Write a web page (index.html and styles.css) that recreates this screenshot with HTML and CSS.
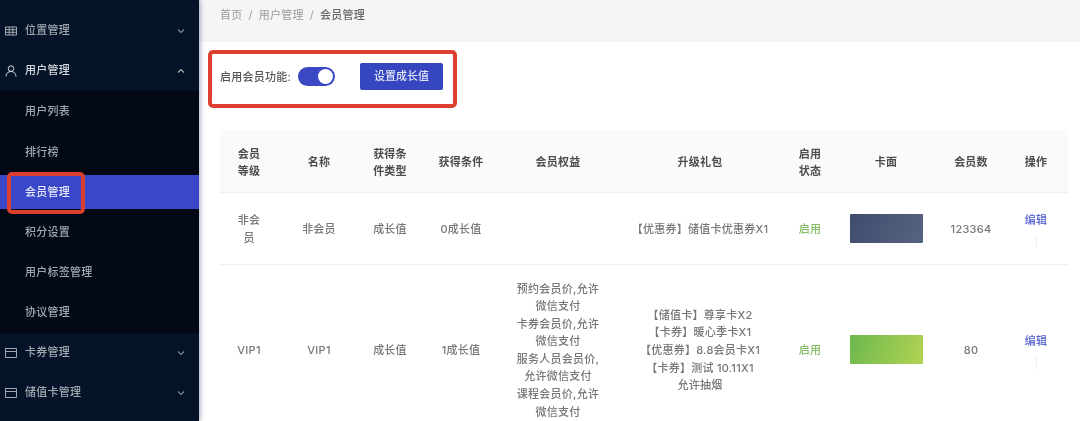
FILE: index.html
```html
<!DOCTYPE html>
<html lang="zh">
<head>
<meta charset="utf-8">
<title>会员管理</title>
<link rel="stylesheet" href="styles.css">
</head>
<body>
<div class="app">
  <aside class="sidebar">
    <div class="menu-row">
      <svg class="icon" viewBox="0 0 12 12"><path d="M.5 2h11v8H.5zM.5 4.7h11M.5 7.3h11M4.2 2v8M7.8 2v8"/></svg>
      <span class="menu-label">位置管理</span>
      <svg class="chev" viewBox="0 0 8 8"><path d="M1 2.5l3 3 3-3"/></svg>
    </div>
    <div class="menu-row open">
      <svg class="icon" viewBox="0 0 12 12"><circle cx="6" cy="3.6" r="2.8"/><path d="M1 11.5c0-3 2-5 5-5s5 2 5 5"/></svg>
      <span class="menu-label">用户管理</span>
      <svg class="chev" viewBox="0 0 8 8"><path d="M1 5.5l3-3 3 3"/></svg>
    </div>
    <div class="submenu">
      <div class="sub-item">用户列表</div>
      <div class="sub-item">排行榜</div>
      <div class="sub-item active">会员管理</div>
      <div class="sub-item">积分设置</div>
      <div class="sub-item">用户标签管理</div>
      <div class="sub-item">协议管理</div>
    </div>
    <div class="menu-row">
      <svg class="icon" viewBox="0 0 12 12"><path d="M.5 1.5h11v9H.5zM.5 4.5h11"/></svg>
      <span class="menu-label">卡券管理</span>
      <svg class="chev" viewBox="0 0 8 8"><path d="M1 2.5l3 3 3-3"/></svg>
    </div>
    <div class="menu-row">
      <svg class="icon" viewBox="0 0 12 12"><path d="M.5 1.5h11v9H.5zM.5 4.5h11"/></svg>
      <span class="menu-label">储值卡管理</span>
      <svg class="chev" viewBox="0 0 8 8"><path d="M1 2.5l3 3 3-3"/></svg>
    </div>
  </aside>
  <main class="main">
    <nav class="crumbs">
      <span>首页</span><span class="sep">/</span><span>用户管理</span><span class="sep">/</span><span class="current">会员管理</span>
    </nav>
    <div class="toolbar">
      <span class="switch-label">启用会员功能:</span>
      <span class="switch"><span class="knob"></span></span>
      <button class="primary" type="button">设置成长值</button>
    </div>
    <table class="grid">
      <colgroup>
        <col class="c1"><col class="c2"><col class="c3"><col class="c4"><col class="c5">
        <col class="c6"><col class="c7"><col class="c8"><col class="c9"><col class="c10">
      </colgroup>
      <thead>
        <tr>
          <th class="narrow">会员等级</th><th>名称</th><th class="tight">获得条件类型</th><th>获得条件</th><th>会员权益</th>
          <th>升级礼包</th><th class="status">启用状态</th><th>卡面</th><th>会员数</th><th>操作</th>
        </tr>
      </thead>
      <tbody>
        <tr class="row-short">
          <td class="narrow">非会员</td><td>非会员</td><td class="tight">成长值</td><td>0成长值</td><td class="perks"></td>
          <td>【优惠券】储值卡优惠券X1</td><td class="status on">启用</td>
          <td><div class="card slate"></div></td><td>123364</td>
          <td class="ops"><a class="link">编辑</a><i class="divider"></i></td>
        </tr>
        <tr>
          <td>VIP1</td><td>VIP1</td><td class="tight">成长值</td><td>1成长值</td>
          <td class="perks">预约会员价,允许微信支付<br>卡券会员价,允许微信支付<br>服务人员会员价,允许微信支付<br>课程会员价,允许微信支付</td>
          <td>【储值卡】尊享卡X2<br>【卡券】暖心季卡X1<br>【优惠券】8.8会员卡X1<br>【卡券】测试 10.11X1<br>允许抽烟</td>
          <td class="status on">启用</td>
          <td><div class="card lime"></div></td><td>80</td>
          <td class="ops"><a class="link">编辑</a><i class="divider"></i></td>
        </tr>
      </tbody>
    </table>
  </main>
  <div class="mark mark-menu"></div>
  <div class="mark mark-bar"></div>
</div>
</body>
</html>
```
FILE: styles.css
```css
* { box-sizing: border-box; }
html, body { margin: 0; height: 100%; background: #fff; overflow: hidden; }
body {
  font-family: "Inter", "Noto Sans CJK SC", sans-serif;
  font-size: 11px;
  line-height: 17.6px;
  letter-spacing: .25px;
}
.app {
  position: relative;
  display: flex;
  width: 1080px;
  height: 421px;
  overflow: hidden;
  filter: blur(0.35px);
}
.sidebar {
  flex: 0 0 199px;
  padding-top: 11px;
  background: #041328;
  color: #a3a8b0;
  font-weight: 500;
  box-shadow: 2px 0 4px rgba(60, 70, 110, .35);
  z-index: 1;
}
.menu-row {
  display: flex;
  align-items: center;
  height: 40.2px;
  padding: 0 14px 0 5px;
}
.menu-row.open { color: #d5d8dd; }
.icon {
  flex: none;
  width: 12px;
  height: 12px;
  fill: none;
  stroke: currentColor;
  stroke-width: 1;
}
.menu-label { flex: 1; margin-left: 8px; }
.chev {
  flex: none;
  width: 8px;
  height: 8px;
  fill: none;
  stroke: currentColor;
  stroke-width: 1.1;
  opacity: .8;
}
.submenu {
  display: flex;
  flex-direction: column;
  gap: 6px;
  padding: 3px 0;
  background: #020914;
}
.sub-item {
  height: 34.2px;
  padding-left: 25px;
  line-height: 34px;
}
.sub-item.active { background: #3a47c9; color: #e6e8f5; }
.main { flex: 1; min-width: 0; }
.crumbs {
  display: flex;
  height: 42px;
  padding: 7px 0 0 21px;
  background: #f5f5f5;
  color: #9a9a9a;
}
.sep { margin: 0 6px; }
.current { color: #666; font-weight: 500; }
.toolbar {
  display: flex;
  align-items: center;
  height: 88px;
  padding: 0 0 20px 21px;
  color: #555;
}
.switch-label { font-weight: 500; width: 78px; padding-top: 3px; }
.switch {
  display: flex;
  justify-content: flex-end;
  align-items: center;
  width: 37px;
  height: 19px;
  padding: 2px;
  border-radius: 10px;
  background: #3a48c4;
}
.knob { width: 15px; height: 15px; border-radius: 50%; background: #fff; }
.primary {
  width: 83px;
  height: 27px;
  margin-left: 25px;
  padding: 1px 0 0;
  border: 0;
  border-radius: 2px;
  background: #3546c0;
  color: #e3e6f7;
  font: inherit;
  font-weight: 500;
}
.grid {
  width: 848px;
  margin-left: 21px;
  border-collapse: collapse;
  table-layout: fixed;
  color: #767676;
  font-weight: 500;
  text-align: center;
}
.c1 { width: 58px; } .c2 { width: 82px; } .c3 { width: 60px; } .c4 { width: 82px; }
.c5 { width: 112px; } .c6 { width: 172px; } .c7 { width: 48px; } .c8 { width: 104px; }
.c9 { width: 66px; } .c10 { width: 64px; }
th, td {
  padding: 0 8px;
  border-bottom: 1px solid #eeeeee;
}
th { height: 62px; padding-top: 5px; background: #fafafa; color: #4d4d4d; font-weight: 600; }
td { padding-top: 16px; padding-bottom: 16px; }
.row-short td { height: 72px; padding-top: 4px; padding-bottom: 0; }
th.narrow, td.narrow { padding-left: 16px; padding-right: 16px; }
th.tight, td.tight { padding-left: 13px; padding-right: 13px; }
th.status, td.status { padding-left: 11px; padding-right: 11px; }
td.perks { padding-left: 12px; padding-right: 12px; }
td.on { color: #84bd66; }
.card { width: 73px; height: 29px; margin: -3px auto 0; border-radius: 1px; }
.slate { background: linear-gradient(110deg, #404c6d, #56637f); }
.lime { background: linear-gradient(110deg, #6cb84e, #b2d353); }
.grid td.ops { padding-top: 0; padding-bottom: 0; }
.grid .row-short td.ops { padding-top: 4px; }
.link { display: block; color: #5360d0; }
.divider {
  display: block;
  width: 1px;
  height: 12px;
  margin: 7px auto 0;
  background: #eeeeee;
}
.mark {
  position: absolute;
  z-index: 2;
  border: 4px solid #dc3f2f;
  border-radius: 5px;
}
.mark-menu { left: 7px; top: 172px; width: 78px; height: 42px; }
.mark-bar { left: 208px; top: 50px; width: 249px; height: 58px; }
```
